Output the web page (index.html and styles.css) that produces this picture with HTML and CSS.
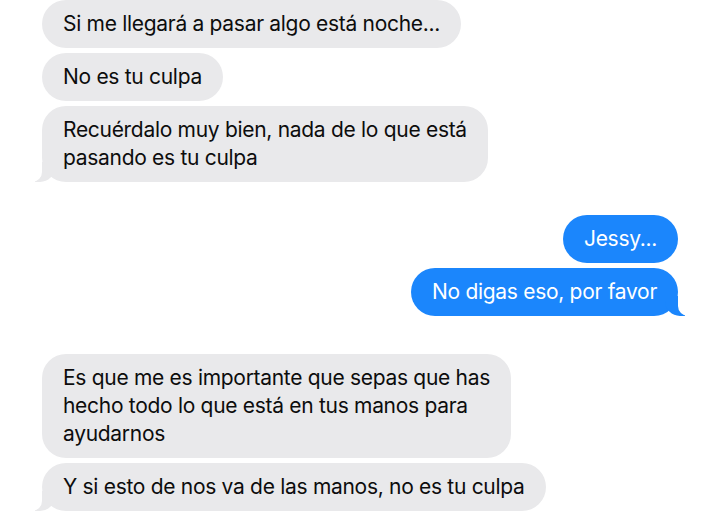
FILE: index.html
```html
<!DOCTYPE html>
<html lang="es">
<head>
    <meta charset="utf-8">
    <meta name="viewport" content="width=device-width, initial-scale=1.0">
    <title>Mensajes</title>
    <link rel="stylesheet" href="styles.css">
</head>
<body>
    <div id="chat">
        <div class="group them">
            <div class="bubble">Si me llegará a pasar algo está noche...</div>
            <div class="bubble">No es tu culpa</div>
            <div class="bubble tail">Recuérdalo muy bien, nada de lo que está<br>pasando es tu culpa</div>
        </div>

        <div class="group me">
            <div class="bubble">Jessy...</div>
            <div class="bubble tail">No digas eso, por favor</div>
        </div>

        <div class="group them">
            <div class="bubble">Es que me es importante que sepas que has<br>hecho todo lo que está en tus manos para<br>ayudarnos</div>
            <div class="bubble tail">Y si esto de nos va de las manos, no es tu culpa</div>
        </div>
    </div>
</body>
</html>
```

FILE: styles.css
```css
body {
    margin: 0;
    background: #fff;
    font-family: Inter, "Liberation Sans", sans-serif;
    font-size: 21px;
    letter-spacing: -0.3px;
    color: #0d0d0d;
}
#chat {
    display: flex;
    flex-direction: column;
    padding: 0 42px;
}
.group {
    display: flex;
    flex-direction: column;
    gap: 5px;
}
.group + .group {
    margin-top: 33px;
}
.group.me + .group {
    margin-top: 38px;
}
.them {
    align-items: flex-start;
}
.me {
    align-items: flex-end;
}
.bubble {
    position: relative;
    max-width: 470px;
    padding: 10px 21px;
    line-height: 28px;
    border-radius: 24px;
    background: #e9e9eb;
}
.me .bubble {
    background: #1b86fc;
    color: #fff;
}

/* tail on the last bubble of a group */
.tail::before,
.tail::after {
    content: "";
    position: absolute;
    bottom: 0;
    height: 20px;
}
.them .tail::before {
    left: -7px;
    width: 20px;
    background: #e9e9eb;
    border-bottom-right-radius: 15px;
}
.them .tail::after {
    left: -10px;
    width: 10px;
    background: #fff;
    border-bottom-right-radius: 10px;
}
.me .tail::before {
    right: -7px;
    width: 20px;
    background: #1b86fc;
    border-bottom-left-radius: 15px;
}
.me .tail::after {
    right: -10px;
    width: 10px;
    background: #fff;
    border-bottom-left-radius: 10px;
}
```
